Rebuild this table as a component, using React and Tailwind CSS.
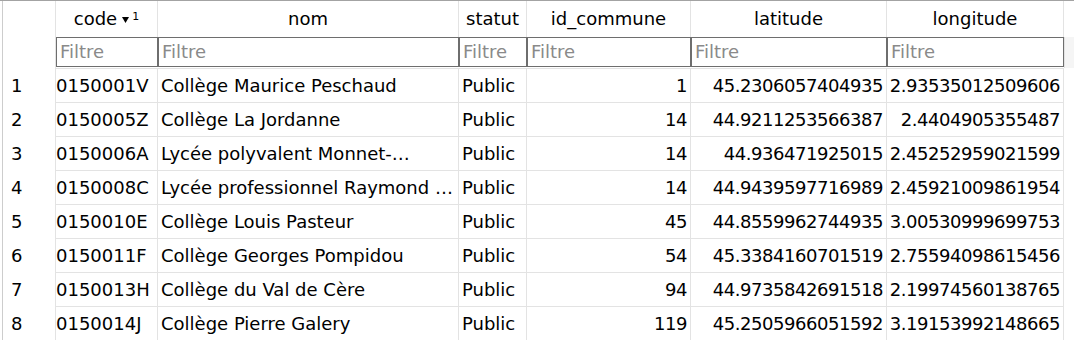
import React from 'react';

// column widths include the 1px right grid line
const columns = [
  { key: 'code', label: 'code', width: 'w-[102px]', align: 'left', pad: 'pl-0' },
  { key: 'nom', label: 'nom', width: 'w-[301px]', align: 'left', pad: 'pl-[3px]' },
  { key: 'statut', label: 'statut', width: 'w-[68px]', align: 'left', pad: 'pl-[3px]' },
  { key: 'id_commune', label: 'id_commune', width: 'w-[164px]', align: 'right', pad: 'pr-[3px]' },
  { key: 'latitude', label: 'latitude', width: 'w-[196px]', align: 'right', pad: 'pr-[3px]' },
  { key: 'longitude', label: 'longitude', width: 'w-[177px]', align: 'right', pad: 'pr-[3px]' },
];

// long names are shown already elided, as in the grid
const rows = [
  { code: '0150001V', nom: 'Collège Maurice Peschaud', statut: 'Public', id_commune: '1', latitude: '45.2306057404935', longitude: '2.93535012509606' },
  { code: '0150005Z', nom: 'Collège La Jordanne', statut: 'Public', id_commune: '14', latitude: '44.9211253566387', longitude: '2.4404905355487' },
  { code: '0150006A', nom: 'Lycée polyvalent Monnet-…', statut: 'Public', id_commune: '14', latitude: '44.936471925015', longitude: '2.45252959021599' },
  { code: '0150008C', nom: 'Lycée professionnel Raymond …', statut: 'Public', id_commune: '14', latitude: '44.9439597716989', longitude: '2.45921009861954' },
  { code: '0150010E', nom: 'Collège Louis Pasteur', statut: 'Public', id_commune: '45', latitude: '44.8559962744935', longitude: '3.00530999699753' },
  { code: '0150011F', nom: 'Collège Georges Pompidou', statut: 'Public', id_commune: '54', latitude: '45.3384160701519', longitude: '2.75594098615456' },
  { code: '0150013H', nom: 'Collège du Val de Cère', statut: 'Public', id_commune: '94', latitude: '44.9735842691518', longitude: '2.19974560138765' },
  { code: '0150014J', nom: 'Collège Pierre Galery', statut: 'Public', id_commune: '119', latitude: '45.2505966051592', longitude: '3.19153992148665' },
];

const SortMark = () => (
  <span className="inline-flex items-start ml-[5px] h-[20px]">
    <svg width="7" height="6" viewBox="0 0 7 6" className="mt-[8px]">
      <path d="M0 0 H7 L3.5 6 Z" fill="#000" />
    </svg>
    <span className="text-[11px] leading-none ml-[3px] mt-[2px]">1</span>
  </span>
);

const App = () => {
  return (
    <div
      className="w-[1074px] h-[340px] overflow-hidden bg-white border-t border-[#a3a3a3] pl-[2px] text-black text-[18px] leading-none"
      style={{ fontFamily: '"DejaVu Sans", Verdana, sans-serif' }}
    >
      <div className="border-l border-[#cdcdcd] h-full">
        {/* header */}
        <div className="flex h-[36px]">
          <div className="w-[53px] shrink-0 border-r border-[#e3e3e3]" />
          {columns.map((col) => (
            <div
              key={col.key}
              className={`${col.width} shrink-0 border-r border-[#e3e3e3] flex items-center justify-center`}
            >
              <span>{col.label}</span>
              {col.key === 'code' && <SortMark />}
            </div>
          ))}
          <div className="flex-1" />
        </div>

        {/* filter row */}
        <div className="flex h-[32px]">
          <div className="w-[53px] shrink-0 border-r border-[#e3e3e3]" />
          {columns.map((col) => (
            <div key={col.key} className={`${col.width} shrink-0 border-b border-[#e3e3e3]`}>
              <div className="h-[30px] border border-[#6e6e6e] bg-white flex items-center pl-[3px] text-[#8a8a8a] overflow-hidden">
                Filtre
              </div>
            </div>
          ))}
          <div className="flex-1 bg-[#f5f5f5] border-l border-[#e3e3e3] h-[31px]" />
        </div>

        {/* data rows */}
        {rows.map((row, i) => (
          <div key={row.code} className="flex h-[34px]">
            <div className="w-[53px] shrink-0 border-r border-[#e3e3e3] flex items-center pl-[8px]">
              {i + 1}
            </div>
            {columns.map((col) => (
              <div
                key={col.key}
                className={`${col.width} ${col.pad} shrink-0 border-r border-b border-[#e3e3e3] flex items-center overflow-hidden ${
                  col.align === 'right' ? 'justify-end tracking-[-0.025em]' : ''
                }`}
              >
                <span className="whitespace-nowrap">{row[col.key]}</span>
              </div>
            ))}
            <div className="flex-1" />
          </div>
        ))}
      </div>
    </div>
  );
};

export default App;
